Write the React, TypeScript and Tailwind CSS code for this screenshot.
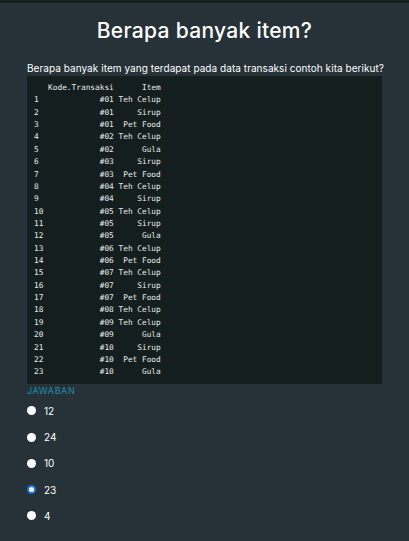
import React from "react";

const rows: [string, string][] = [
  ["#01", "Teh Celup"],
  ["#01", "Sirup"],
  ["#01", "Pet Food"],
  ["#02", "Teh Celup"],
  ["#02", "Gula"],
  ["#03", "Sirup"],
  ["#03", "Pet Food"],
  ["#04", "Teh Celup"],
  ["#04", "Sirup"],
  ["#05", "Teh Celup"],
  ["#05", "Sirup"],
  ["#05", "Gula"],
  ["#06", "Teh Celup"],
  ["#06", "Pet Food"],
  ["#07", "Teh Celup"],
  ["#07", "Sirup"],
  ["#07", "Pet Food"],
  ["#08", "Teh Celup"],
  ["#09", "Teh Celup"],
  ["#09", "Gula"],
  ["#10", "Sirup"],
  ["#10", "Pet Food"],
  ["#10", "Gula"],
];

const options = ["12", "24", "10", "23", "4"];

function formatRow(i: number, kode: string, item: string) {
  const idx = String(i + 1);
  return idx.padEnd(14, " ") + kode + " " + item.padStart(9, " ");
}

export default function App() {
  const output = ["   Kode.Transaksi      Item", ...rows.map((r, i) => formatRow(i, r[0], r[1]))].join("\n");

  return (
    <div className="min-h-[541px] w-[409px] bg-[#263238] border-t-[3px] border-[#162020] text-white" style={{ fontFamily: "Inter, 'Noto Sans', sans-serif" }}>
      <h1 className="pt-[16px] text-center text-[21px] font-medium leading-[24px] tracking-[0.3px]">Berapa banyak item?</h1>

      <div className="px-[27px] pt-[19px]">
        <p className="text-[10px] font-normal leading-[12px] whitespace-nowrap tracking-[0.05px]">
          Berapa banyak item yang terdapat pada data transaksi contoh kita berikut?
        </p>

        <pre
          className="mt-[2px] bg-[#141e1e] pl-[7px] pt-[6px] pb-[5px] text-[7.8px] leading-[12.36px] text-[#e8ecec]"
          style={{ fontFamily: "'DejaVu Sans Mono', monospace" }}
        >
          {output}
        </pre>

        <div className="mt-[1px] text-[9px] font-normal leading-[11px] tracking-[0.6px] text-[#1f8cab]">JAWABAN</div>

        <div className="mt-[2px] flex flex-col">
          {options.map((o) => {
            const checked = o === "23";
            return (
              <label key={o} className="flex h-[26.25px] items-center gap-[8px]">
                {checked ? (
                  <span className="flex h-[9px] w-[9px] items-center justify-center rounded-full bg-[#1a73e8]">
                    <span className="h-[5px] w-[5px] rounded-full bg-white" />
                  </span>
                ) : (
                  <span className="h-[9px] w-[9px] rounded-full bg-white" />
                )}
                <span className="text-[10px] font-normal leading-none">{o}</span>
              </label>
            );
          })}
        </div>
      </div>
    </div>
  );
}
